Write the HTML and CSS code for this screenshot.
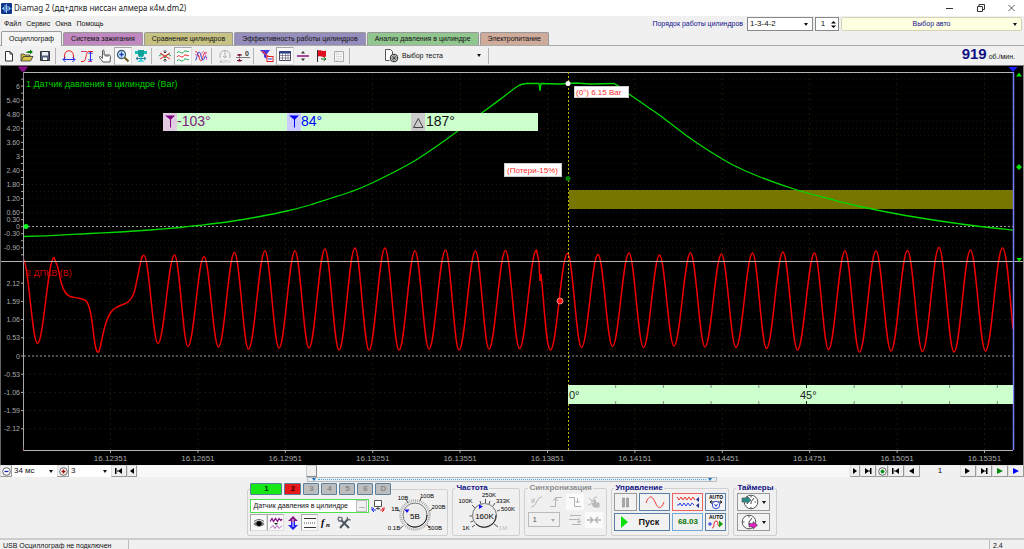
FILE: index.html
```
<!DOCTYPE html>
<html lang="ru">
<head>
<meta charset="utf-8">
<title>Diamag 2</title>
<link rel="stylesheet" href="styles.css">
</head>
<body>
<div class="window">
<header class="titlebar">
  <svg class="logo" width="11" height="11" viewBox="0 0 11 11"><rect width="11" height="11" rx="1" fill="#12368c"/><path d="M1 5.500h1M2.500 4v3M4 2v7M5.500 1v9M7 3v5M8.500 4v3M9.500 5.500h1" stroke="#8fc4f4" fill="none"/></svg>
  <h1 class="title">Diamag 2 (дд+дпкв ниссан алмера к4м.dm2)</h1>
  <div class="winbtns">
    <button aria-label="Свернуть"><svg width="8" height="8"><path d="M0 4.500h7" stroke="#333"/></svg></button>
    <button aria-label="Развернуть"><svg width="8" height="8" fill="none" stroke="#333"><path d="M.5 2.500h5v5h-5zM2 2.500V.5h5.500v5H6"/></svg></button>
    <button aria-label="Закрыть"><svg width="8" height="8"><path d="M.5 1l6 6M6.500 1l-6 6" stroke="#333" stroke-width=".8"/></svg></button>
  </div>
</header>

<div class="menubar">
  <nav class="menu"><a href="#">Файл</a><a href="#">Сервис</a><a href="#">Окна</a><a href="#">Помощь</a></nav>
  <div class="order">
    <label for="order">Порядок работы цилиндров</label>
    <span class="pick order-pick"><select id="order"><option>1-3-4-2</option></select></span>
    <span class="spin"><input id="cyl" value="1" aria-label="Цилиндр"><svg width="7" height="9" viewBox="0 0 7 9"><path d="M1 3.500L3.500 1 6 3.500zM1 5.500h5L3.500 8z"/></svg></span>
    <span class="pick car"><select aria-label="Выбор авто"><option>Выбор авто</option></select></span>
  </div>
</div>

<nav class="tabs">
  <button class="tab active">Осциллограф</button>
  <button class="tab ignition">Система зажигания</button>
  <button class="tab compare">Сравнение цилиндров</button>
  <button class="tab effect">Эффективность работы цилиндров</button>
  <button class="tab pressure">Анализ давления в цилиндре</button>
  <button class="tab power">Электропитание</button>
</nav>

<div class="toolbar">
  <button aria-label="Новый"><svg class="ic" viewBox="0 0 14 14"><path d="M3.500 2.500h4.500l2.500 2.500v7h-7zM8 2.500V5h2.500" fill="#fff" stroke="#333"/></svg></button>
  <button aria-label="Открыть"><svg class="ic" viewBox="0 0 14 14"><path d="M1 12V5h3l1 1h5v2" fill="#c9b43a" stroke="#444" stroke-width=".8"/><path d="M1 12l2.500-4.500H13L10.500 12z" fill="#d8c648" stroke="#333" stroke-width=".8"/><path d="M6 4c1-2 3-2 4-2V.5L13 3l-3 2.300V4z" fill="#108010"/></svg></button>
  <button aria-label="Сохранить"><svg class="ic" viewBox="0 0 14 14"><path d="M2.500 2.500h9v9h-9z" fill="#54627c" stroke="#333"/><path d="M4 3h6v3.500H4z" fill="#e8eef6"/><path d="M5 8.500h4V11H5z" fill="#fff"/></svg></button>
  <i class="sep"></i>
  <button aria-label="Период"><svg class="ic" viewBox="0 0 14 14" fill="none"><path d="M2.500 10V7c0-7 9-7 9 0v3" stroke="#f02020"/><path d="M1 10.500h12M3.500 8L1 10.500 3.500 13M10.500 8l2.500 2.500-2.500 2.500" stroke="#2030f0"/></svg></button>
  <button aria-label="Фронт"><svg class="ic" viewBox="0 0 14 14" fill="none"><path d="M1 12.500h2c4 0 2-10 6-10h4" stroke="#f02020"/><path d="M1 2.500h6M8 12.500h4" stroke="#d04080"/><path d="M10.500 3v9M8.500 5l2-2 2 2M8.500 10l2 2 2-2" stroke="#2030f0"/></svg></button>
  <button aria-label="Рука"><svg class="ic" viewBox="0 0 14 14"><path d="M5 13L1.500 8.500c-.5-1 .7-1.500 1.500-.5l1.500 1.300V2c0-1.300 1.600-1.300 1.600 0v4h5c1 0 1.400.8 1.400 1.500L12 13z" fill="#fff" stroke="#444" stroke-width=".9"/><path d="M8 6v2M10 6v2" stroke="#444" stroke-width=".8"/></svg></button>
  <button class="on" aria-label="Лупа"><svg class="ic" viewBox="0 0 14 14"><circle cx="5.500" cy="5.500" r="4" fill="#d8f0fa" stroke="#3a5a78" stroke-width="1.300"/><path d="M5.500 3.300v4.400M3.300 5.500h4.400" stroke="#1838c0" stroke-width="1.300"/><path d="M8.500 8.500L12.500 12.500" stroke="#70581c" stroke-width="2"/></svg></button>
  <button aria-label="Измерение"><svg class="ic" viewBox="0 0 14 14"><path d="M1 2h12v3H1z" fill="#18c0b8"/><path d="M4 1h6v5l-1 2H5L4 6z" fill="#10a098"/><path d="M3 13c3-1 3-6 4-6s1 5 4 6z" fill="#50d8e0"/><path d="M2 9.500h10M4 8L2 9.500 4 11M10 8l2 1.500L10 11" stroke="#207898" fill="none" stroke-width=".9"/></svg></button>
  <i class="sep"></i>
  <button aria-label="Масштаб"><svg class="ic" viewBox="0 0 14 14" fill="none"><path d="M1 7l3-2 3 4 3-4 3 2" stroke="#10a050"/><path d="M2 4l10 6M12 4L2 10" stroke="#f02828"/><path d="M7 1v3M5.500 2.500L7 4l1.500-1.500M7 13v-3M5.500 11.500L7 10l1.500 1.500" stroke="#333" stroke-width=".9"/></svg></button>
  <button class="on" aria-label="Раздельно"><svg class="ic" viewBox="0 0 14 14" fill="none"><path d="M1 4c2-3 3 0 5 0s2-3 4-2 2 1 3 0" stroke="#10a850"/><path d="M1 8c2-3 3 0 5 0s2-3 4-2 2 1 3 0" stroke="#f02020"/><path d="M1 12c2-3 3 0 5 0s2-3 4-2 2 1 3 0" stroke="#10a850"/></svg></button>
  <button aria-label="Совместно"><svg class="ic" viewBox="0 0 14 14" fill="none"><path d="M1 3c3-3 4 9 6 9S9 1 13 4" stroke="#f03030"/><path d="M1 11C3 12 3 3 5 3s2 8 4 8 1-7 4-2" stroke="#2848f0"/><path d="M1 6c2-2 3 3 5 1s2-5 4-4 1 5 3 8" stroke="#e03090" stroke-width=".7"/></svg></button>
  <i class="sep"></i>
  <button class="off" aria-label="Авто"><svg class="ic" viewBox="0 0 14 14"><path d="M2 9V6c0-6 10-6 10 0v3M7 2v7M5 7l2 2 2-2" fill="none" stroke="#b0b0b0"/><text x="7" y="13.500" class="tiny" fill="#aaa">AUTO</text></svg></button>
  <button aria-label="Ноль"><svg class="ic" viewBox="0 0 14 14"><path d="M0 8.500h14" stroke="#777"/><path d="M1 6h5M1 11.500h5" stroke="#701028"/><path d="M2 5h3L3.500 8zM2 12.500h3L3.500 9z" fill="#801030"/><text x="11" y="6.500" class="zero">0</text></svg></button>
  <i class="sep"></i>
  <button aria-label="Фильтр"><svg class="ic" viewBox="0 0 14 14"><path d="M0 1h10L6.500 5.500V10L4 8V5.500z" fill="#4038e8"/><path d="M2 2l7 6" stroke="#f03040" stroke-width="1.200"/><rect x="7" y="7.500" width="6" height="5" fill="#fff" stroke="#e02020"/><path d="M8 10h4" stroke="#2030e0"/></svg></button>
  <button class="on" aria-label="Таблица"><svg class="ic" viewBox="0 0 14 14"><path d="M1.500 2.500h11v9h-11z" fill="#fff" stroke="#445"/><path d="M1 3.500h12" stroke="#243c90" stroke-width="2"/><path d="M4.500 4v8M7.500 4v8M10 4v8M1 6.500h12M1 9h12" stroke="#667" stroke-width=".7"/></svg></button>
  <button aria-label="Разделитель"><svg class="ic" viewBox="0 0 14 14"><path d="M1 7h12" stroke="#901080" stroke-width="1.500"/><path d="M5 4.500L7 2l2 2.500zM5 9.500L7 12l2-2.500z" fill="#333"/></svg></button>
  <button aria-label="Флаг"><svg class="ic" viewBox="0 0 14 14"><path d="M3.500 1v12" stroke="#333"/><path d="M4 1.500c3-1 4 1.500 8 0v6c-4 1.500-5-1-8 0z" fill="#e01020"/><path d="M7 10h5M9.500 8l2.500 2-2.500 2" stroke="#107010" fill="none"/></svg></button>
  <button class="off" aria-label="Отчёт"><svg class="ic" viewBox="0 0 14 14"><path d="M2.500 2.500h9v10h-9z" fill="#f6f6f6" stroke="#aaa"/><path d="M5 3v9M6.500 5h3M6.500 7.500h3M6.500 10h3" stroke="#bbb" stroke-dasharray="1"/></svg></button>
  <i class="sep"></i>
  <button class="test"><svg class="ic" viewBox="0 0 14 14"><path d="M4.500 11.500h-4v-11h5l2 2v3" fill="#fff" stroke="#555"/><circle cx="9" cy="9" r="3.800" fill="#d8e0d8" stroke="#333"/><path d="M9 5v8M5 9h8M6.500 6.500l5 5M11.500 6.500l-5 5" stroke="#333" stroke-width=".7"/></svg><span>Выбор теста</span><i class="caret"></i></button>
  <i class="sep"></i>
  <div class="rpm"><b>919</b> <span>об./мин.</span></div>
</div>

<main class="scope">
<svg class="chart" viewBox="0 66 1024 399" id="chart" role="img" aria-label="Осциллограмма">
  <g id="grid"></g>
  <rect x="569" y="190" width="444" height="19" fill="#767600"/>
  <path class="zeroline" d="M24 226.500H1013M24 356H1013"/>
  <path id="pressure" class="trace green"/>
  <text x="26" y="87" class="name" fill="#00d000">1 Датчик давления в цилиндре (Bar)</text>
  <path id="crank" class="trace red"/>
  <text x="26" y="276" class="name" fill="#c80000">2 ДПКВ (В)</text>
  <path d="M23 72.500H1013M0 261.500H1024M23 450.500H1013" stroke="#b4b4b4"/>
  <path d="M23.500 72V450" stroke="#a8a8a8"/>
  <path d="M.5 66V465" stroke="#666"/><path d="M1023.500 66V465" stroke="#888"/>
  <path d="M1013.500 72V450" stroke="#7c7cff" stroke-width="1.500"/>
  <path d="M568.500 72V450" stroke="#c0b400" stroke-dasharray="2 2"/>
  <path d="M18 66.500h10l-3.500 5h-3zM23 71v8M23 256v6M23 447v4" fill="#8a108a" stroke="#500850" stroke-width=".5"/>
  <path d="M1008.500 67h9l-4.500 5z" fill="#1818ff"/>
  <path d="M1019 72.500l3 4h-6zM1016.500 258h5.500l-2.700 4zM1019 164l3 3-3 3-3-3z" fill="#00e400"/>
  <circle cx="26" cy="226.500" r="2.500" fill="#00ff20"/>
  <circle cx="568" cy="178.500" r="2.500" fill="#008000"/>
  <circle cx="568" cy="83.500" r="2.500" fill="#fff"/>
  <circle cx="560" cy="301" r="3" fill="#ff1010" stroke="#ffb0b0" stroke-width=".7"/>
  <rect x="163" y="113" width="375" height="18" fill="#ccffcc"/>
  <rect x="163" y="113" width="14" height="18" fill="#e2cce2"/>
  <rect x="287" y="113" width="14" height="18" fill="#ccccff"/>
  <rect x="411" y="113" width="14" height="18" fill="#ccc"/>
  <path d="M165 115.500h10l-4 4v8h-1v-8z" fill="#800080"/>
  <path d="M289 115.500h10l-4 4v8h-1v-8z" fill="#0000ff"/>
  <path d="M413.500 127.500h9.500l-4.700-9z" fill="none" stroke="#444"/>
  <text x="177" y="126" class="mark" fill="#80207e">-103°</text>
  <text x="301" y="126" class="mark" fill="#0000ff">84°</text>
  <text x="426" y="126" class="mark" fill="#111">187°</text>
  <rect x="574.500" y="86.500" width="54" height="11" fill="#fff" stroke="#ccc"/>
  <text x="576" y="95" class="note">(0°) 6.15 Bar</text>
  <rect x="504.500" y="163.500" width="57" height="13" fill="#fff" stroke="#ccc"/>
  <text x="507" y="173" class="note">(Потери-15%)</text>
  <rect x="568" y="385" width="445" height="19" fill="#ccffcc"/>
  <path id="degticks" stroke="#888"/>
  <path d="M806.500 385v3M806.500 401v3" stroke="#222"/>
  <text x="569" y="399" class="deg">0°</text>
  <text x="800" y="399" class="deg">45°</text>
</svg>
</main>

<div class="navrow">
  <button class="nb round" aria-label="Уменьшить"><svg width="9" height="9" viewBox="0 0 9 9"><circle cx="4.500" cy="4.500" r="3.800" fill="#fff" stroke="#444" stroke-width=".8"/><path d="M2.500 4.500h4" stroke="#2020c0" stroke-width="1.300"/></svg></button>
  <span class="pick span-pick"><select aria-label="Развёртка"><option>34 мс</option></select></span>
  <button class="nb round" aria-label="Увеличить"><svg width="9" height="9" viewBox="0 0 9 9"><circle cx="4.500" cy="4.500" r="3.800" fill="#fff" stroke="#444" stroke-width=".8"/><path d="M2.500 4.500h4M4.500 2.500v4" stroke="#a01010" stroke-width="1.500"/></svg></button>
  <span class="pick zoom-pick"><select aria-label="Масштаб"><option>3</option></select></span>
  <button class="nb wide" aria-label="В начало"><svg width="8" height="6" viewBox="0 0 8 6"><path d="M0 0h1.500v6H0zM7 0v6L3 3zM2 2.500h2v1H2z"/></svg></button>
  <button class="nb" aria-label="Назад"><svg width="4" height="6" viewBox="0 0 4 6"><path d="M4 0v6L0 3z"/></svg></button>
  <div class="track"><button class="thumb" aria-label="Прокрутка"></button></div>
  <button class="nb" aria-label="Вперёд"><svg width="4" height="6" viewBox="0 0 4 6"><path d="M0 0l4 3-4 3z"/></svg></button>
  <button class="nb wide" aria-label="В конец"><svg width="8" height="6" viewBox="0 0 8 6"><path d="M1 0l4 3-4 3zM6 0h1.500v6H6zM4 2.500h2v1H4z"/></svg></button>
  <button class="nb round" aria-label="Запись"><svg width="9" height="9" viewBox="0 0 9 9"><circle cx="4.500" cy="4.500" r="3.800" fill="#fff" stroke="#444" stroke-width=".8"/><circle cx="4.500" cy="4.500" r="2" fill="#109020"/></svg></button>
  <button class="nb wide" aria-label="Первый кадр"><svg width="8" height="6" viewBox="0 0 8 6"><path d="M0 0h1.500v6H0zM7 0v6L3 3zM2 2.500h2v1H2z"/></svg></button>
  <button class="nb wide" aria-label="Предыдущий кадр"><svg width="6" height="6" viewBox="0 0 6 6"><path d="M5 0v6L0 3z"/></svg></button>
  <output class="frame">1</output>
  <button class="nb wide" aria-label="Следующий кадр"><svg width="6" height="6" viewBox="0 0 6 6"><path d="M0 0l5 3-5 3z"/></svg></button>
  <button class="nb wide" aria-label="Последний кадр"><svg width="8" height="6" viewBox="0 0 8 6"><path d="M1 0l4 3-4 3zM6 0h1.500v6H6zM4 2.500h2v1H4z"/></svg></button>
  <button class="nb wide" aria-label="Воспроизвести"><svg width="6" height="6" viewBox="0 0 6 6"><path d="M0 0l6 3-6 3z" fill="#0a8a0a"/></svg></button>
  <button class="nb wide" aria-label="Воспроизвести дальше"><svg width="6" height="6" viewBox="0 0 6 6"><path d="M0 0l6 3-6 3z" fill="#0000ff"/></svg></button>
</div>

<div class="panel">
  <div class="splitter"><i class="dart"></i><i class="dots"></i><i class="dart"></i></div>
  <div class="groups">
    <fieldset class="group channel">
      <legend class="channels">
        <button class="ch c1">1</button><button class="ch c2">2</button><button class="ch">3</button><button class="ch">4</button><button class="ch">5</button><button class="ch">6</button><button class="ch">D</button>
      </legend>
      <div class="channel-body">
        <div class="channel-left">
          <div class="sensor-row">
            <span class="sensor"><input value="Датчик давления в цилиндре" aria-label="Датчик"><button aria-label="Выбрать датчик">...</button></span>
            <svg class="ic" viewBox="0 0 14 14"><path d="M3.500 1.500h7v6h-7zM7 8v3M5 9.500h4" fill="#fff" stroke="#555"/><path d="M1 8v3h4M3 9l-2 2 2 2" stroke="#2030e0" fill="none"/><path d="M13 8v3H9M11 9l2 2-2 2" stroke="#e02020" fill="none"/></svg>
          </div>
          <div class="mode-row">
            <button class="on" aria-label="Показать"><svg class="ic" viewBox="0 0 14 14"><path d="M1.500 8c3-4.500 8-4.500 11 0-3 3.500-8 3.500-11 0z" fill="#777"/><circle cx="7" cy="7.500" r="2.500" fill="#000"/><path d="M2 5.500c3-2.500 7-2.500 10 0" fill="none" stroke="#333" stroke-width=".8"/></svg></button>
            <button class="on" aria-label="Авто"><svg class="ic" viewBox="0 0 14 14" fill="none"><path d="M1 5.500l2-3 1.500 3 2-3 2 3 1.500-3 2 2 1-1.500" stroke="#8a108a" stroke-width="1.300"/><path d="M1 12.500l3-3 2 3 2-3 2 3 3-3" stroke="#b060b8"/><path d="M5 7h4L7 9z" fill="#222"/></svg></button>
            <button aria-label="Сдвиг"><svg class="ic" viewBox="0 0 14 14"><path d="M7 0l5 5H9v3H5V5H2z" fill="#8a108a"/><path d="M7 14L2 9h3V6h4v3h3z" fill="#2020f0"/><path d="M7 3v8" stroke="#e8e8ff"/></svg></button>
            <button class="on" aria-label="Уровни"><svg class="ic" viewBox="0 0 14 14"><path d="M1 2.500h12M1 11.500h12" stroke="#333"/><path d="M1 7h12" stroke="#555" stroke-dasharray="1 1"/></svg></button>
            <button aria-label="Формула"><svg class="ic" viewBox="0 0 14 14"><text x="1" y="10" class="fx">f</text><text x="6" y="11" class="fxn">n</text></svg></button>
            <button aria-label="Настройки"><svg class="ic" viewBox="0 0 14 14"><path d="M4 4l8 8M11 3L3 12" stroke="#4a5560" stroke-width="2"/><path d="M2 1l3 1v3H2L1 3zM10 1l1 2.500L13.500 4" fill="none" stroke="#667" stroke-width="1.300"/></svg></button>
          </div>
        </div>
        <svg class="knob" width="60" height="46" viewBox="386 490 60 46">
          <circle cx="415" cy="517" r="14.500" fill="none" stroke="#aaa" stroke-width="2.500" stroke-dasharray="1 1"/>
          <path d="M403 528l-3 2.500M400 513l-3-1M408 505l-2-3.500M420 503l1-3M429 513l3-1.500M427 527l3 2.500" stroke="#555"/>
          <circle cx="415" cy="517" r="12" fill="#ececec" stroke="#777"/><path d="M407 526a12 12 0 0 0 20-9" fill="none" stroke="#222"/>
          <path d="M404.500 511.500h5l-2.500 3.500z" fill="#1010ff"/>
          <text x="415" y="520.500" class="kv">5В</text>
          <text x="394" y="532">0.1В</text><text x="395" y="513">1В</text><text x="403" y="501.500">10В</text><text x="427" y="499.500">100В</text><text x="438.500" y="511">200В</text><text x="435" y="532">500В</text>
        </svg>
      </div>
    </fieldset>

    <fieldset class="group">
      <legend>Частота</legend>
      <svg class="knob freq" width="60" height="41" viewBox="456 493 60 41">
        <path d="M475 527l-3 2M473 518h-3.500M475 510l-3-3M485.500 505v-4M493 508l2-3M497 513l3-1M494 526l4 3M473.500 523l-3 1M481 506l-1-3M489 506l1-3" stroke="#555"/>
        <circle cx="484.500" cy="517.500" r="12" fill="#ececec" stroke="#777"/><path d="M476 526a12 12 0 0 0 20-9" fill="none" stroke="#222"/>
        <path d="M479 506.500l4 2-4 2.500z" fill="#1010ff"/>
        <text x="484.500" y="520.500" class="kv">160K</text>
        <text x="466" y="532">1K</text><text x="465.500" y="505">100K</text><text x="489" y="498.500">250K</text><text x="503" y="505">333K</text><text x="508" y="513">500K</text><text x="503" y="532" fill="#bbb">1M</text>
      </svg>
    </fieldset>

    <fieldset class="group sync">
      <legend>Синхронизация</legend>
      <div class="sync-grid">
        <button disabled aria-label="Спад"><svg class="ic" viewBox="0 0 14 14" fill="none" stroke="#b4b4b4"><path d="M1 12c6 0 5-10 11-10M1 4l3 3M4 3v4H1"/></svg></button>
        <button disabled aria-label="Фронт"><svg class="ic" viewBox="0 0 14 14" fill="none" stroke="#b4b4b4"><path d="M1 11.500h5.500v-9H13M4 6l2.500-3L9 6"/></svg></button>
        <button disabled class="lit" aria-label="Срез"><svg class="ic" viewBox="0 0 14 14" fill="none" stroke="#b4b4b4"><path d="M1 2.500h5.500v9H13M9.500 3v5M7.500 6l2 2 2-2"/></svg></button>
        <button disabled aria-label="Ручная"><svg class="ic" viewBox="0 0 14 14" fill="none" stroke="#b4b4b4"><path d="M1 10c5 0 4-8 9-8M2 3l3 3"/><path d="M7 12L5 9l2-1V5h1.500v3H12v4z" fill="#bbb"/></svg></button>
        <span class="pick sync-pick"><select disabled aria-label="Канал синхронизации"><option>1</option></select></span>
        <button disabled aria-label="Уровень"><svg class="ic" viewBox="0 0 14 14" fill="none" stroke="#b4b4b4"><path d="M4 2.500h9M1 6.500h10M4 11.500h9M3 1v3M11 5v5M9 8l2 2 2-2"/></svg></button>
        <button disabled class="lit" aria-label="Сжать"><svg class="ic" viewBox="0 0 14 14" fill="none" stroke="#b4b4b4" stroke-width="1.400"><path d="M0 7h6M3 4l3 3-3 3M14 7H8M11 4L8 7l3 3"/></svg></button>
      </div>
    </fieldset>

    <fieldset class="group">
      <legend>Управление</legend>
      <div class="control">
        <button class="pause" aria-label="Пауза"><svg width="9" height="11"><path d="M1.500 1v9h2V1zM5.500 1v9h2V1z" fill="#aaa" stroke="#888" stroke-width=".6"/></svg></button>
        <button class="blue" aria-label="Однократно"><svg width="20" height="13" viewBox="0 0 20 13"><path d="M1 7C4-1 7-1 10 6s6 8 9 0" fill="none" stroke="#f03838"/></svg></button>
        <button class="redbox" aria-label="Поток"><svg width="24" height="14" viewBox="0 0 24 14" fill="none"><path d="M1 2l2 3 2-3 2 3 2-3 2 3 2-3 2 3 2-3 2 3" stroke="#f03030"/><path d="M1 10h2l1-2 2 3 2-3 2 3 2-3 2 3 2-3 2 2" stroke="#3040e0"/><path d="M23 2v5l-3-2.500zM23 8v5l-3-2.500z" fill="#203090"/></svg></button>
        <button class="blue" aria-label="Авто"><svg width="16" height="16" viewBox="0 0 16 16"><text x="8" y="5" class="auto">AUTO</text><path d="M2 8h12M4 6.500L2 8l2 1.500M12 6.500L14 8l-2 1.500" stroke="#222" fill="none"/><circle cx="8" cy="11" r="3.700" fill="#fff" stroke="#3848c8"/><path d="M6.500 10L8 12.500 9.500 10" stroke="#3848c8" fill="none"/></svg></button>
        <button class="blue start"><svg width="7" height="12"><path d="M0 0l7 6-7 6z" fill="#08e008"/></svg><span>Пуск</span></button>
        <output class="value">68.03</output>
        <button class="blue" aria-label="Авто пуск"><svg width="16" height="16" viewBox="0 0 16 16"><text x="8" y="5" class="auto">AUTO</text><path d="M0 10h4M2 8v4" stroke="#2030e0"/><path d="M4 14c3 0 1-7 4-7s1 5 3 5" fill="none" stroke="#e02020"/><path d="M11 6.500l4 3.500-4 3.500z" fill="#10a010"/></svg></button>
      </div>
    </fieldset>

    <fieldset class="group timers">
      <legend>Таймеры</legend>
      <div class="timer-col">
        <button aria-label="Таймер до"><svg width="18" height="16" viewBox="0 0 18 16"><circle cx="10" cy="8" r="6.800" fill="#fff" stroke="#555"/><path d="M10 8l3-4M10 8v2M10 2v1.500M10 13v1M15 8h-1.500" stroke="#444"/><path d="M1 4h5V2l4 4-4 4V8H1z" fill="#289088" stroke="#444" stroke-width=".6"/></svg><i class="caret"></i></button>
        <button aria-label="Таймер после"><svg width="18" height="16" viewBox="0 0 18 16"><circle cx="8" cy="8" r="6.800" fill="#fff" stroke="#555"/><path d="M8 8l3-4M8 8v3M8 2v1.500M2 8h1.500" stroke="#444"/><path d="M8 9.500h4v-2l4.500 3.700L12 15v-2H8z" fill="#e020c0" stroke="#444" stroke-width=".6"/></svg><i class="caret"></i></button>
      </div>
    </fieldset>
  </div>
</div>

<footer class="status"><span class="usb">USB Осциллограф не подключен</span><span class="ver">2.4</span></footer>
</div>
<script src="chart.js"></script>
</body>
</html>
```
FILE: styles.css
```
* { box-sizing: border-box; }
body { margin: 0; background: #f0f0f0; color: #111; font: 7px/10px "Liberation Sans", Arial, sans-serif; }
button, input, select { font: inherit; color: inherit; margin: 0; padding: 0; border: 0; background: none; }
button { display: flex; align-items: center; justify-content: center; }
svg { display: block; flex: none; }
.window { display: flex; flex-direction: column; min-height: 100vh; }
.ic { width: 14px; height: 14px; }

.titlebar { display: flex; align-items: center; height: 16px; padding: 0 8px 0 1px; background: #fff; }
.title { flex: 1; margin: 0 0 0 2px; font: 8px/12px "Noto Sans", "Open Sans", sans-serif; color: #222; }
.winbtns { display: flex; gap: 23px; }

.menubar { display: flex; align-items: center; justify-content: space-between; height: 16px; padding: 0 2px 0 4px; }
.menu { display: flex; gap: 5px; }
.menu a { color: #111; text-decoration: none; }
.order { display: flex; align-items: center; gap: 2px; color: #10108c; }
.order label { margin-right: 2px; }
.pick { position: relative; display: flex; color: #111; }
.pick select { width: 100%; appearance: none; outline: 0; }
.pick::after { content: ""; position: absolute; right: 4px; top: 50%; margin-top: -1px; border: 2px solid transparent; border-top: 3px solid #111; border-bottom: 0; pointer-events: none; }
.order-pick { width: 66px; height: 14px; padding-left: 2px; background: #fff; border: 1px solid #888; font-size: 8px; }
.spin { display: flex; align-items: center; width: 24px; height: 14px; background: #fff; border: 1px solid #888; color: #111; font-size: 8px; }
.spin input { width: 14px; text-align: center; }
.car { width: 181px; height: 14px; background: #ffffe1; border: 1px solid #d4d4b4; border-radius: 2px; color: #10108c; }
.car select { text-align: center; text-align-last: center; }

.tabs { display: flex; align-items: flex-end; gap: 1px; height: 14px; padding-left: 1px; border-bottom: 1px solid #aaa; }
.tab { height: 13px; padding: 0 7px; border: 1px solid #999; border-bottom: 0; border-radius: 2px 2px 0 0; }
.active { height: 15px; margin-bottom: -1px; background: #f4f4f4; }
.ignition { background: #bf88bf; }
.compare { background: #c6c284; }
.effect { background: #958dbb; }
.pressure { background: #91c68f; }
.power { background: #cfab9b; }

.toolbar { display: flex; align-items: center; height: 20px; border-bottom: 1px solid #777; }
.toolbar button { width: 18px; height: 18px; }
.toolbar .on, .mode-row .on { background: #fafafa; border: 1px solid #ddd; border-top-color: #aaa; border-left-color: #aaa; }
.sep { width: 5px; height: 16px; margin-left: 1px; border-left: 1px solid #b4b4b4; }
.tiny { font-size: 4px; text-anchor: middle; }
.zero { font: bold 7px "Liberation Sans", sans-serif; text-anchor: middle; fill: #333; }
.toolbar .test { width: 102px; margin-left: 31px; gap: 3px; }
.test span { flex: 1; text-align: left; }
.caret { border: 2px solid transparent; border-top: 3px solid #111; border-bottom: 0; }
.test .caret { margin-right: 6px; }
.rpm { margin: 0 9px 0 auto; white-space: nowrap; line-height: 16px; }
.rpm b { font-size: 15px; color: #101084; }

.scope { background: #000; }
.chart { width: 100%; height: auto; }
.trace { fill: none; }
.green { stroke: #00d800; stroke-width: 1.3; }
.red { stroke: #f00000; stroke-width: 1.5; }
.zeroline { stroke: #999; stroke-dasharray: 2 2; }
.name { font-size: 9px; }
.mark { font-size: 14px; }
.note { font-size: 8px; fill: #ff2828; }
.deg { font-size: 11px; fill: #222; }
.ylab { font-size: 7px; fill: #aaa; text-anchor: end; }
.xlab { font-size: 8px; fill: #aaa; text-anchor: middle; }

.navrow { display: flex; align-items: center; height: 12px; background: #f0f0f0; }
.nb { width: 10px; height: 12px; background: #f0f0f0; border: 1px solid #ddd; border-right-color: #999; border-bottom-color: #999; }
.wide { width: 16px; }
.round { width: 12px; }
.navrow .pick { height: 12px; background: #fff; padding-left: 2px; font-size: 8px; }
.span-pick { width: 45px; }
.zoom-pick { width: 42px; }
.track { flex: 1; height: 12px; margin: 0 1px; padding-left: 16.4%; background: #f8f8f8; }
.thumb { width: 11px; height: 12px; background: #f0f0f0; border: 1px solid #ccc; border-right-color: #888; border-bottom-color: #888; }
.frame { width: 40px; text-align: center; font-size: 8px; }

.panel { flex: 1; display: flex; flex-direction: column; align-items: center; }
.splitter { display: flex; align-items: center; gap: 2px; width: 40%; height: 5px; padding: 0 4px; background: #e4eef6; border: 1px solid #bbb; }
.dots { flex: 1; border-top: 1px dotted #58a8d8; }
.dart { border: 2px solid transparent; border-top: 3px solid #1870c0; border-bottom: 0; }
.groups { display: flex; align-items: stretch; gap: 4px; padding: 1px 0 2px; }
.group { display: block; min-width: 0; margin: 0; padding: 0 1px 1px; border: 1px solid #d0d0d0; border-radius: 2px; }
.group legend { height: 10px; margin-left: 1px; padding: 0 1px; font-weight: bold; font-size: 8px; color: #101084; }
.group .channels { display: flex; gap: 2px; height: 12px; padding: 0; }
.ch { width: 16px; height: 12px; background: #bdbdbd; border: 1px solid #5880a0; border-radius: 1px; color: #888; font-size: 8px; }
.c1 { width: 32px; background: #18e818; color: #003800; font-weight: bold; }
.c2 { width: 17px; background: #e81818; color: #400000; font-weight: bold; }
.channel-body { display: flex; gap: 1px; padding-left: 1px; }
.channel-left { display: flex; flex-direction: column; gap: 1px; padding-top: 4px; }
.sensor-row { display: flex; align-items: center; gap: 2px; }
.sensor { display: flex; width: 119px; height: 14px; padding: 0 1px 0 2px; background: #fff; border: 1px solid #50e050; }
.sensor input { flex: 1; min-width: 0; }
.sensor button { width: 11px; background: #f0f0f0; border: 1px solid #bbb; }
.mode-row { display: flex; }
.mode-row button { width: 17px; height: 17px; }
.fx { font: italic bold 10px "Liberation Serif", serif; }
.fxn { font: italic bold 7px "Liberation Serif", serif; }
.knob { overflow: visible; }
.knob text { font-size: 6px; text-anchor: middle; }
.channel .knob { margin-top: -7px; }
.knob .kv { font-size: 8px; }
.freq { margin: -2px 2px 0; }
.group.sync legend { color: #8c8c8c; margin-left: 2px; }
.sync-grid { display: grid; grid-template-columns: repeat(4, 18px); gap: 2px 1px; padding: 1px 2px; }
.sync-grid button { height: 16px; }
.lit { background: #fafafa; }
.sync-pick { grid-column: span 2; width: 32px; height: 15px; padding-left: 3px; border: 1px solid #bbb; font-size: 8px; }
.sync-pick::after { border-top-color: #aaa; }
.control { display: grid; grid-template-columns: 23px 31px 31px 21px; gap: 2px; padding: 0 1px; }
.control button, .timer-col button { height: 18px; border: 1px solid #999; background: #f2f2f2; }
.control .blue { border-color: #5880a8; }
.control .redbox { border-color: #f06060; }
.control .start { grid-column: span 2; justify-content: flex-start; padding-left: 6px; font-weight: bold; font-size: 9px; }
.start span { flex: 1; text-align: center; }
.value { display: flex; align-items: center; justify-content: center; border: 1px solid #70a8d8; color: #087808; font-weight: bold; font-size: 8px; }
.auto { font: bold 5px "Liberation Sans", sans-serif; text-anchor: middle; }
.timer-col { display: grid; gap: 2px; padding: 0 2px; }
.timer-col button { width: 33px; gap: 3px; }

.status { display: flex; height: 13px; border-top: 2px solid #ccc; line-height: 11px; }
.status .usb { width: 129px; padding-left: 3px; border-right: 1px solid #bbb; white-space: nowrap; }
.status .ver { width: 35px; margin-left: auto; padding-left: 3px; border-left: 1px solid #bbb; }
```
FILE: chart.js
```
const NS = "http://www.w3.org/2000/svg";
const grid = document.getElementById("grid");

function add(tag, attrs, text) {
  const node = document.createElementNS(NS, tag);
  for (const key in attrs) node.setAttribute(key, attrs[key]);
  if (text !== undefined) node.textContent = text;
  grid.appendChild(node);
}

const gridStroke = "#18180a";

// Time axis
for (let i = 0; i < 11; i++) {
  const x = 110.5 + i * 87.4;
  add("path", { d: `M${x} 73V450`, stroke: gridStroke, "stroke-dasharray": "2 3" });
  add("path", { d: `M${x} 450v3`, stroke: "#aaa" });
  add("text", { x, y: 461, class: "xlab" }, (16.12351 + i * 0.003).toFixed(5));
}

// Pressure axis, 0.3 Bar per line
const barLabels = [6, 5.4, 4.8, 4.2, 3.6, 3, 2.4, 1.8, 1.2, 0.6, 0.3, 0, -0.3, -0.9];
for (let k = -4; k <= 21; k++) {
  const y = 226.7 - k * 7.03;
  add("path", { d: `M24 ${y}H1013`, stroke: gridStroke, "stroke-dasharray": "1 3" });
  add("path", { d: `M21 ${y}h2`, stroke: "#aaa" });
}
barLabels.forEach(v => add("text", { x: 20, y: 229.2 - v * 23.43, class: "ylab" }, Number.isInteger(v) ? v : v.toFixed(2)));

// Voltage axis, 0.53 V per line
for (let k = -4; k <= 4; k++) {
  const y = 356 - k * 18.2;
  add("path", { d: `M24 ${y}H1013`, stroke: gridStroke, "stroke-dasharray": "2 3" });
  add("path", { d: `M21 ${y}h2`, stroke: "#aaa" });
  add("text", { x: 20, y: y + 2.5, class: "ylab" }, k ? (k * 0.53).toFixed(2) : "0");
}

// Smooth curve through all points
function smooth(p) {
  let d = "";
  for (let i = 0; i < p.length - 1; i++) {
    const a = p[i - 1] || p[i], b = p[i], c = p[i + 1], e = p[i + 2] || c;
    d += `C${b[0] + (c[0] - a[0]) / 6} ${b[1] + (c[1] - a[1]) / 6} ${c[0] - (e[0] - b[0]) / 6} ${c[1] - (e[1] - b[1]) / 6} ${c[0]} ${c[1]}`;
  }
  return d;
}

// Half sine waves between extremes
function waves(p) {
  let d = "";
  for (let i = 0; i < p.length - 1; i++) {
    const [x0, y0] = p[i], [x1, y1] = p[i + 1], k = (x1 - x0) * 0.364;
    d += `C${x0 + k} ${y0} ${x1 - k} ${y1} ${x1} ${y1}`;
  }
  return d;
}

const rise = [[23, 236.5], [60, 235.2], [90, 233.5], [120, 232], [150, 230], [180, 227.5], [198, 225.5], [230, 221.5], [260, 216.5], [287, 211], [310, 205], [330, 198.5], [350, 192], [372, 183], [410, 163.5], [434, 148], [457, 131.5], [483, 112], [502, 98], [518, 86], [526, 83.5]];
const fall = [[614, 83.5], [620, 87], [629, 94], [647, 106.5], [660, 115.5], [687, 136], [710, 151.5], [733, 165], [760, 177], [797, 190], [830, 199], [860, 206.5], [900, 214.5], [940, 221], [980, 226.5], [1013, 230]];
document.getElementById("pressure").setAttribute("d",
  "M23 236.5" + smooth(rise) + "L539 83.5L540 91L541 83.5L560 84L576 83L590 84L614 83.500" + smooth(fall));

const missing = [[54, 257.5], [58, 268], [61, 282], [65, 292], [70, 296.500], [80, 298.500], [87, 302], [91, 315], [95, 344], [97.5, 352], [100, 348], [105, 326], [111, 312], [118, 306.500], [128, 302], [134, 293], [139, 270], [142, 257], [144, 255.500]];
const before = [[144, 255.5], [158, 343.5], [174.5, 255], [188, 346.5], [204, 256.5], [218.5, 347], [234.5, 252.5], [248.5, 349], [265, 251], [279, 348], [295, 251], [309, 348], [325, 249], [339, 350], [355, 248], [369, 350], [385, 248], [399, 350], [415, 251], [429, 349], [445.5, 250], [459, 350], [475.5, 251], [489, 349], [505.5, 250.5], [519.5, 348.5], [536.5, 250]];
const after = [[550.5, 350], [567.5, 253.5], [581.5, 347.5], [598, 254.5], [612.5, 346.5], [629, 253], [643.5, 347.5], [659.5, 255], [674, 346], [690.5, 253], [705, 347], [721.5, 254], [736, 347.5], [752.5, 253], [766.5, 348.5], [783, 252], [797.5, 350], [814.5, 253], [828.5, 349.5], [845, 251], [859.5, 352], [876, 251], [891, 351], [907.5, 250.5], [922.5, 351.5], [939, 247.5], [954, 352], [970.5, 250], [985.5, 351], [1002.5, 248]];
document.getElementById("crank").setAttribute("d",
  "M23 259" + waves([[23, 259], [37.5, 343.5], [54, 257.5]]) + smooth(missing) + waves(before) +
  "L539 262L540 281L541 274C544 300 546 350 550.5 350" + waves(after) + "C1007 248 1010 300 1013 329");

// Crank angle ruler, 9 degrees per tick
let ticks = "";
for (let i = 1; i < 10; i++) {
  if (i !== 5) ticks += `M${568 + i * 47.7} 385v3m0 13v3`;
}
document.getElementById("degticks").setAttribute("d", ticks);
```
